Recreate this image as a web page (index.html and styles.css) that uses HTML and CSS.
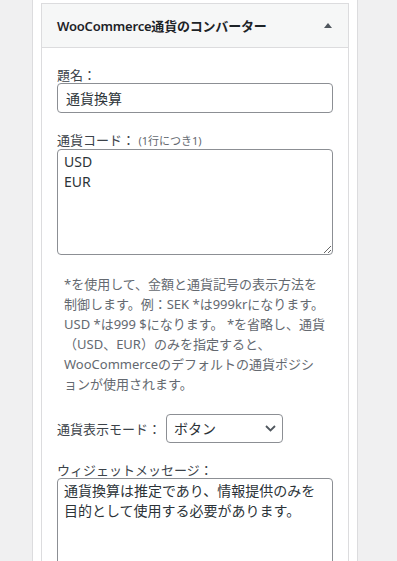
FILE: index.html
```html
<!DOCTYPE html>
<html lang="ja">
<head>
<meta charset="utf-8">
<title>WooCommerce通貨のコンバーター</title>
<link rel="stylesheet" href="styles.css">
</head>
<body>
<div class="sidebar">
  <div class="widget">
    <div class="widget-top">
      <h3 class="widget-title">WooCommerce通貨のコンバーター</h3>
      <svg class="toggle" width="8" height="5" viewBox="0 0 8 5"><polygon points="4,0 8,5 0,5" fill="#50575e"/></svg>
    </div>
    <div class="widget-inside">
      <div class="field">
        <label class="label" for="title">題名：</label>
        <input class="input" id="title" type="text" value="通貨換算">
      </div>
      <div class="field">
        <label class="label" for="codes">通貨コード： <small class="hint">(1行につき1)</small></label>
        <textarea class="textarea codes" id="codes">USD
EUR</textarea>
      </div>
      <p class="description">*を使用して、金額と通貨記号の表示方法を制御します。例：SEK *は999krになります。USD *は999 $になります。 *を省略し、通貨（USD、EUR）のみを指定すると、WooCommerceのデフォルトの通貨ポジションが使用されます。</p>
      <div class="field-row">
        <label class="label" for="mode">通貨表示モード：</label>
        <select class="select" id="mode"><option>ボタン</option></select>
      </div>
      <div class="field">
        <label class="label" for="msg">ウィジェットメッセージ：</label>
        <textarea class="textarea message" id="msg">通貨換算は推定であり、情報提供のみを目的として使用する必要があります。</textarea>
      </div>
    </div>
  </div>
</div>
</body>
</html>
```

FILE: styles.css
```css
html, body {
  margin: 0;
  padding: 0;
}
body {
  background: #f0f0f1;
  font-family: "Noto Sans", "Noto Sans CJK JP", sans-serif;
  color: #3c434a;
  font-size: 13px;
}
.sidebar {
  margin-left: 32px;
  width: 324px;
  min-height: 561px;
  box-sizing: content-box;
  background: #fff;
  border-left: 1px solid #dcdcde;
  border-right: 1px solid #dcdcde;
  padding: 3px 0 0;
}
.widget {
  margin: 0 8px;
  border: 1px solid #dcdcde;
  background: #fff;
  min-height: 600px;
}
.widget-top {
  height: 43px;
  display: flex;
  align-items: center;
  justify-content: space-between;
  padding: 0 16px 0 15px;
  background: #f6f7f7;
  border-bottom: 1px solid #dcdcde;
}
.widget-title {
  margin: 0;
  font-size: 13px;
  font-weight: 600;
  color: #1d2327;
  line-height: 16px;
  letter-spacing: -0.2px;
}
.toggle {
  display: block;
}
.widget-inside {
  padding: 0 15px;
}
.field {
  margin-top: 19px;
}
.label {
  display: block;
  font-size: 13px;
  line-height: 16px;
  color: #3c434a;
}
.hint {
  font-size: 11px;
  color: #646970;
}
.input, .textarea, .select {
  display: block;
  box-sizing: border-box;
  width: 100%;
  margin: 0;
  border: 1px solid #8c8f94;
  border-radius: 4px;
  background: #fff;
  color: #2c3338;
  font-family: "Noto Sans", "Noto Sans CJK JP", sans-serif;
  font-size: 14px;
}
.input {
  height: 30px;
  padding: 0 8px;
  line-height: 28px;
}
.textarea {
  padding: 2px 6px;
  line-height: 20px;
  resize: vertical;
}
.codes {
  height: 106px;
}
.message {
  height: 120px;
}
.description {
  margin: 19px 0 0;
  padding: 0 7px;
  font-size: 13px;
  line-height: 20px;
  color: #646970;
}
.field-row {
  margin-top: 20px;
  display: flex;
  align-items: center;
  gap: 5px;
}
.field-row .label {
  display: inline;
}
.select {
  width: 117px;
  height: 29px;
  padding: 0 24px 0 7px;
  line-height: 27px;
  -webkit-appearance: none;
  appearance: none;
  background: #fff url("data:image/svg+xml;utf8,<svg xmlns='http://www.w3.org/2000/svg' width='11' height='7' viewBox='0 0 11 7'><polyline points='1,1 5.5,5.5 10,1' fill='none' stroke='%2350575e' stroke-width='1.8'/></svg>") no-repeat right 6px center;
}
```
